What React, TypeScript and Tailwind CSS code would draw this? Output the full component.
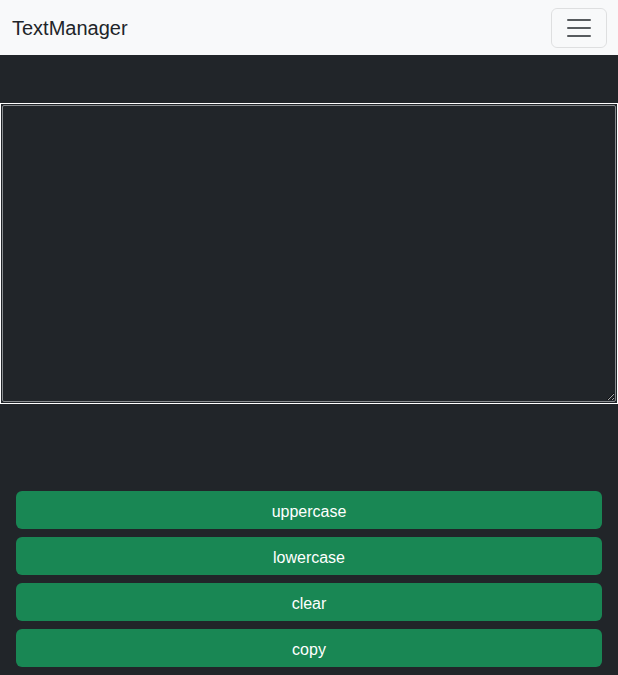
import React from 'react'

export default function App() {
  const actions = ['uppercase', 'lowercase', 'clear', 'copy']

  return (
    <div className="min-h-screen bg-[#212529] font-['Liberation_Sans',Arial,sans-serif]">
      {/* Navbar */}
      <nav className="h-[55px] bg-[#f8f9fa] flex items-center justify-between pl-3 pr-[11px]">
        <span className="text-[20px] text-[#212529] leading-none">TextManager</span>
        <button className="w-[56px] h-[40px] rounded-[6px] border border-[rgba(0,0,0,0.1)] flex items-center justify-center">
          <svg width="30" height="30" viewBox="0 0 30 30">
            <path
              d="M4 7h22M4 15h22M4 23h22"
              stroke="rgba(33,37,41,0.75)"
              strokeWidth="2"
              strokeLinecap="round"
            />
          </svg>
        </button>
      </nav>

      {/* Text area */}
      <div className="pt-[48px]">
        <div className="border border-white p-px">
          <textarea
            className="block w-full h-[297px] bg-[#212529] border border-[#8a8d90] rounded-[2px] outline-none text-white p-2"
          />
        </div>
      </div>

      {/* Actions */}
      <div className="mt-[87px] px-4 flex flex-col gap-2 pb-2">
        {actions.map((a) => (
          <button
            key={a}
            className="h-[38px] w-full rounded-[6px] bg-[#198754] text-white text-[16px] pt-[3px]"
          >
            {a}
          </button>
        ))}
      </div>
    </div>
  )
}
